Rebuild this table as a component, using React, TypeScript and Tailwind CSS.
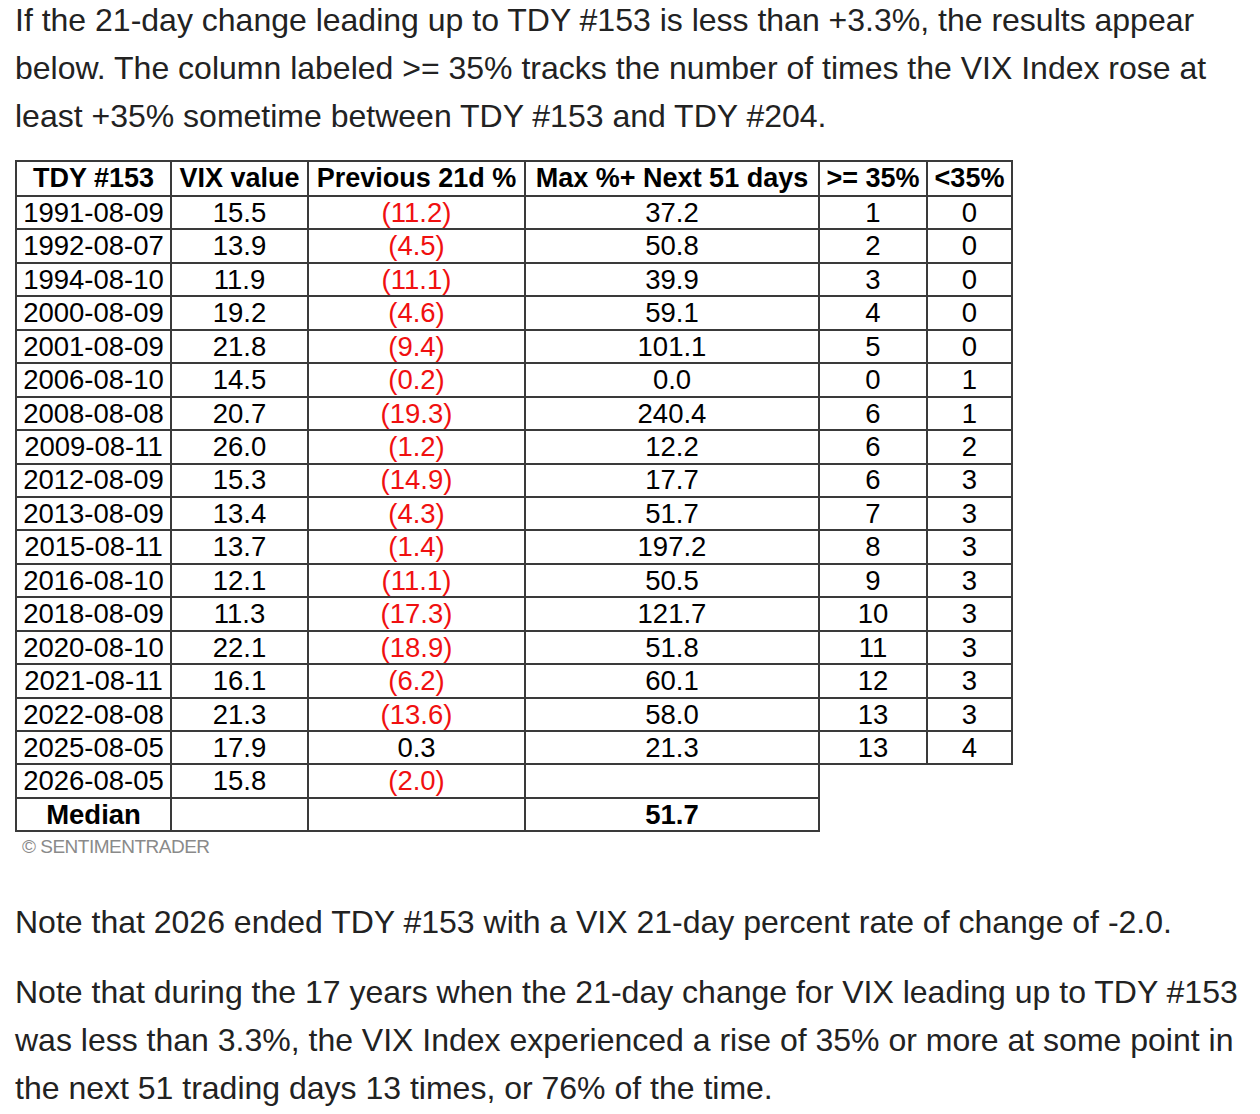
const rows: [string, string, string, string, string, string][] = [
	["1991-08-09", "15.5", "(11.2)", "37.2", "1", "0"],
	["1992-08-07", "13.9", "(4.5)", "50.8", "2", "0"],
	["1994-08-10", "11.9", "(11.1)", "39.9", "3", "0"],
	["2000-08-09", "19.2", "(4.6)", "59.1", "4", "0"],
	["2001-08-09", "21.8", "(9.4)", "101.1", "5", "0"],
	["2006-08-10", "14.5", "(0.2)", "0.0", "0", "1"],
	["2008-08-08", "20.7", "(19.3)", "240.4", "6", "1"],
	["2009-08-11", "26.0", "(1.2)", "12.2", "6", "2"],
	["2012-08-09", "15.3", "(14.9)", "17.7", "6", "3"],
	["2013-08-09", "13.4", "(4.3)", "51.7", "7", "3"],
	["2015-08-11", "13.7", "(1.4)", "197.2", "8", "3"],
	["2016-08-10", "12.1", "(11.1)", "50.5", "9", "3"],
	["2018-08-09", "11.3", "(17.3)", "121.7", "10", "3"],
	["2020-08-10", "22.1", "(18.9)", "51.8", "11", "3"],
	["2021-08-11", "16.1", "(6.2)", "60.1", "12", "3"],
	["2022-08-08", "21.3", "(13.6)", "58.0", "13", "3"],
	["2025-08-05", "17.9", "0.3", "21.3", "13", "4"],
];

const headers = ["TDY #153", "VIX value", "Previous 21d %", "Max %+ Next 51 days", ">= 35%", "<35%"];

const cell = "border-2 border-[#3a3a3a] p-0 text-center align-middle leading-none";

function ChangeCell({ value }: { value: string }) {
	const negative = value.startsWith("(");
	return (
		<td className={`${cell} ${negative ? "text-[#f01010]" : ""}`}>{value}</td>
	);
}

function VixTable() {
	return (
		<div className="mt-[20px]">
			<table
				className="border-collapse table-fixed w-[996px] text-[27.5px] text-black"
				style={{ fontFamily: '"Liberation Sans", Arial, sans-serif' }}
			>
				<colgroup>
					<col className="w-[155px]" />
					<col className="w-[137px]" />
					<col className="w-[217px]" />
					<col className="w-[294px]" />
					<col className="w-[108px]" />
					<col className="w-[85px]" />
				</colgroup>
				<thead>
					<tr className="h-[35px]">
						{headers.map((h) => (
							<th key={h} className={`${cell} text-[27px] font-bold whitespace-nowrap`}>
								{h}
							</th>
						))}
					</tr>
				</thead>
				<tbody>
					{rows.map((r) => (
						<tr key={r[0]} className="h-[33.45px]">
							<td className={cell}>{r[0]}</td>
							<td className={cell}>{r[1]}</td>
							<ChangeCell value={r[2]} />
							<td className={cell}>{r[3]}</td>
							<td className={cell}>{r[4]}</td>
							<td className={cell}>{r[5]}</td>
						</tr>
					))}
					<tr className="h-[33.45px]">
						<td className={cell}>2026-08-05</td>
						<td className={cell}>15.8</td>
						<ChangeCell value="(2.0)" />
						<td className={cell}></td>
						<td className="border-0 p-0"></td>
						<td className="border-0 p-0"></td>
					</tr>
					<tr className="h-[33.45px]">
						<td className={`${cell} font-bold`}>Median</td>
						<td className={cell}></td>
						<td className={cell}></td>
						<td className={`${cell} font-bold`}>51.7</td>
						<td className="border-0 p-0"></td>
						<td className="border-0 p-0"></td>
					</tr>
				</tbody>
			</table>
			<div
				className="mt-[4px] ml-[7px] text-[19px] leading-[22px] text-[#8a8a8a] tracking-[-0.5px]"
				style={{ fontFamily: '"Liberation Sans Narrow", "Liberation Sans", Arial, sans-serif' }}
			>
				© SENTIMENTRADER
			</div>
		</div>
	);
}

export default function App() {
	return (
		<div
			className="bg-white pl-[15px] pr-[8px] pb-[10px] text-[32px] leading-[48px] text-[#222]"
			style={{ fontFamily: '"Liberation Sans", Arial, Helvetica, sans-serif' }}
		>
			<p className="-mt-[4px]">
				If the 21-day change leading up to TDY #153 is less than +3.3%, the
				results appear below. The column labeled &gt;= 35% tracks the number of
				times the VIX Index rose at least +35% sometime between TDY #153 and TDY
				#204.
			</p>
			<VixTable />
			<p className="mt-[40px]">
				Note that 2026 ended TDY #153 with a VIX 21-day percent rate of change
				of -2.0.
			</p>
			<p className="mt-[22px]">
				Note that during the 17 years when the 21-day change for VIX leading up
				to TDY #153 was less than 3.3%, the VIX Index experienced a rise of 35%
				or more at some point in the next 51 trading days 13 times, or 76% of
				the time.
			</p>
		</div>
	);
}
